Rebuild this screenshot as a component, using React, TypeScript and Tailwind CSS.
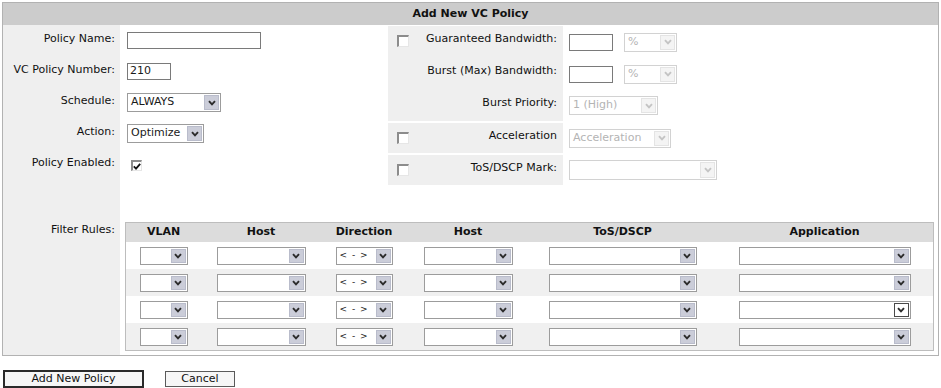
import React from "react";
import clsx from "clsx";

const font = "font-['DejaVu_Sans',Verdana,sans-serif]";

const Chevron = ({ disabled }: { disabled?: boolean }) => (
  <svg width="8" height="6" viewBox="0 0 8 6">
    <path
      d="M1 1.2 L4 4.4 L7 1.2"
      fill="none"
      stroke={disabled ? "#c4c4c4" : "#2b2b2b"}
      strokeWidth="1.9"
    />
  </svg>
);

type SelectProps = {
  className: string;
  value?: string;
  disabled?: boolean;
  hot?: boolean;
  small?: boolean;
};

const Select = ({ className, value, disabled, hot, small }: SelectProps) => (
  <div
    className={clsx(
      "flex items-stretch border bg-white",
      disabled ? "border-[#d2d2d2] text-[#b4b4b4]" : "border-[#9c9c9c] text-[#1a1a1a]",
      className
    )}
  >
    <span
      className={clsx(
        "flex flex-1 items-center overflow-hidden whitespace-nowrap pl-[3px]",
        small ? "text-[9px] tracking-[1px]" : "text-[11px]"
      )}
    >
      {value}
    </span>
    <span
      className={clsx(
        "m-px flex w-[15px] items-center justify-center border",
        disabled
          ? "border-[#e4e4e4] bg-[#f4f4f4]"
          : hot
            ? "border-[#4a4a4a] bg-white"
            : "border-[#b9bccb] bg-[#cbcdd9]"
      )}
    >
      <Chevron disabled={disabled} />
    </span>
  </div>
);

const TextInput = ({ className, value }: { className: string; value?: string }) => (
  <div
    className={clsx(
      "flex items-center border border-[#7a7a7a] bg-white pl-[2px] text-[11px] text-[#1a1a1a]",
      className
    )}
  >
    {value}
  </div>
);

const Check = ({ checked }: { checked?: boolean }) => (
  <span
    className={clsx(
      "flex items-center justify-center border-l-2 border-t-2 border-b border-r border-l-[#8c8c8c] border-t-[#8c8c8c] border-b-[#e6e6e6] border-r-[#e6e6e6] bg-white",
      checked ? "h-[11px] w-[11px]" : "h-[12px] w-[12px]"
    )}
  >
    {checked && (
      <svg width="8" height="7" viewBox="0 0 8 7">
        <path d="M0.8 3.4 L3 5.6 L7.2 0.8" fill="none" stroke="#111" strokeWidth="1.8" />
      </svg>
    )}
  </span>
);

const leftRows = [
  { label: "Policy Name:", field: <TextInput className="h-[17px] w-[134px]" /> },
  { label: "VC Policy Number:", field: <TextInput className="h-[17px] w-[44px]" value="210" /> },
  { label: "Schedule:", field: <Select className="h-[19px] w-[94px]" value="ALWAYS" /> },
  { label: "Action:", field: <Select className="h-[19px] w-[77px]" value="Optimize" /> },
  {
    label: "Policy Enabled:",
    field: (
      <span className="ml-[4px] mt-[2px]">
        <Check checked />
      </span>
    ),
  },
];

const columns = ["VLAN", "Host", "Direction", "Host", "ToS/DSCP", "Application"];
const selectWidths = ["w-[48px]", "w-[89px]", "w-[57px]", "w-[89px]", "w-[148px]", "w-[172px]"];

const RightRow = ({
  height,
  check,
  label,
  children,
}: {
  height: string;
  check?: boolean;
  label: string;
  children: React.ReactNode;
}) => (
  <div className={clsx("flex", height)}>
    <div className="flex w-[175px] bg-[#efefef]">
      <div className="w-[27px] pl-[9px] pt-[9px]">{check && <Check />}</div>
      <div className="flex-1 pr-[6px] pt-[6px] text-right leading-[13px]">{label}</div>
    </div>
    <div className="flex flex-1 items-center gap-[11px] pl-[6px]">{children}</div>
  </div>
);

export default function App() {
  return (
    <div className={clsx("min-h-[388px] bg-white text-[11px] text-[#111]", font)}>
      <div className="pt-[2px] pl-[2px]">
        <div className="w-[937px] border border-[#b2b2b2]">
          <div className="flex h-[22px] items-center justify-center bg-[#cccccc] font-bold text-[#111]">
            Add New VC Policy
          </div>

          {/* top section */}
          <div className="flex">
            <div className="w-[117px] bg-[#efefef]">
              {leftRows.map((r) => (
                <div key={r.label} className="h-[31px] pr-[5px] pt-[7px] text-right leading-[13px]">
                  {r.label}
                </div>
              ))}
            </div>
            <div className="w-[268px]">
              {leftRows.map((r) => (
                <div key={r.label} className="flex h-[31px] items-center pl-[7px]">
                  {r.field}
                </div>
              ))}
            </div>
            <div className="flex flex-1 flex-col gap-[2px] pt-px">
              <div>
                <RightRow height="h-[32px]" check label="Guaranteed Bandwidth:">
                  <TextInput className="h-[17px] w-[44px]" />
                  <Select className="h-[19px] w-[53px]" value="%" disabled />
                </RightRow>
                <RightRow height="h-[32px]" label="Burst (Max) Bandwidth:">
                  <TextInput className="h-[17px] w-[44px]" />
                  <Select className="h-[19px] w-[53px]" value="%" disabled />
                </RightRow>
                <RightRow height="h-[31px]" label="Burst Priority:">
                  <Select className="h-[19px] w-[89px]" value="1 (High)" disabled />
                </RightRow>
              </div>
              <RightRow height="h-[30px]" check label="Acceleration">
                <Select className="h-[19px] w-[102px]" value="Acceleration" disabled />
              </RightRow>
              <RightRow height="h-[30px]" check label="ToS/DSCP Mark:">
                <Select className="h-[20px] w-[148px]" disabled />
              </RightRow>
            </div>
          </div>

          {/* spacer */}
          <div className="flex h-[32px]">
            <div className="w-[117px] bg-[#efefef]" />
          </div>

          {/* filter rules */}
          <div className="flex">
            <div className="w-[117px] bg-[#efefef] pr-[5px] pt-[6px] text-right leading-[13px]">
              Filter Rules:
            </div>
            <div className="pb-[4px] pl-[5px] pt-[5px]">
              <div className="w-[809px] border border-[#bdbdbd]">
                <div className="grid h-[19px] grid-cols-[75px_120px_86px_122px_187px_217px] bg-[#dcdcdc] font-bold">
                  {columns.map((c, i) => (
                    <div key={i} className="flex items-center justify-center">
                      {c}
                    </div>
                  ))}
                </div>
                {[0, 1, 2, 3].map((row) => (
                  <div
                    key={row}
                    className={clsx(
                      "grid h-[27px] grid-cols-[75px_120px_86px_122px_187px_217px]",
                      row % 2 === 1 ? "bg-[#f0f0f0]" : "bg-white"
                    )}
                  >
                    {columns.map((c, i) => (
                      <div key={i} className="flex items-center justify-center">
                        <Select
                          className={clsx("h-[18px]", selectWidths[i])}
                          value={c === "Direction" ? "< - >" : undefined}
                          small={c === "Direction"}
                          hot={row === 2 && i === 5}
                        />
                      </div>
                    ))}
                  </div>
                ))}
              </div>
            </div>
          </div>
        </div>
      </div>

      <div className="mt-[14px] flex items-start pl-[3px]">
        <button
          type="button"
          className="flex h-[18px] w-[141px] items-center justify-center border-2 border-[#2a2a2a] bg-[#f6f6f6] text-[11px] text-[#111]"
        >
          Add New Policy
        </button>
        <button
          type="button"
          className="ml-[21px] mt-px flex h-[16px] w-[70px] items-center justify-center border border-[#5a5a5a] bg-[#f6f6f6] text-[11px] text-[#111]"
        >
          Cancel
        </button>
      </div>
    </div>
  );
}
